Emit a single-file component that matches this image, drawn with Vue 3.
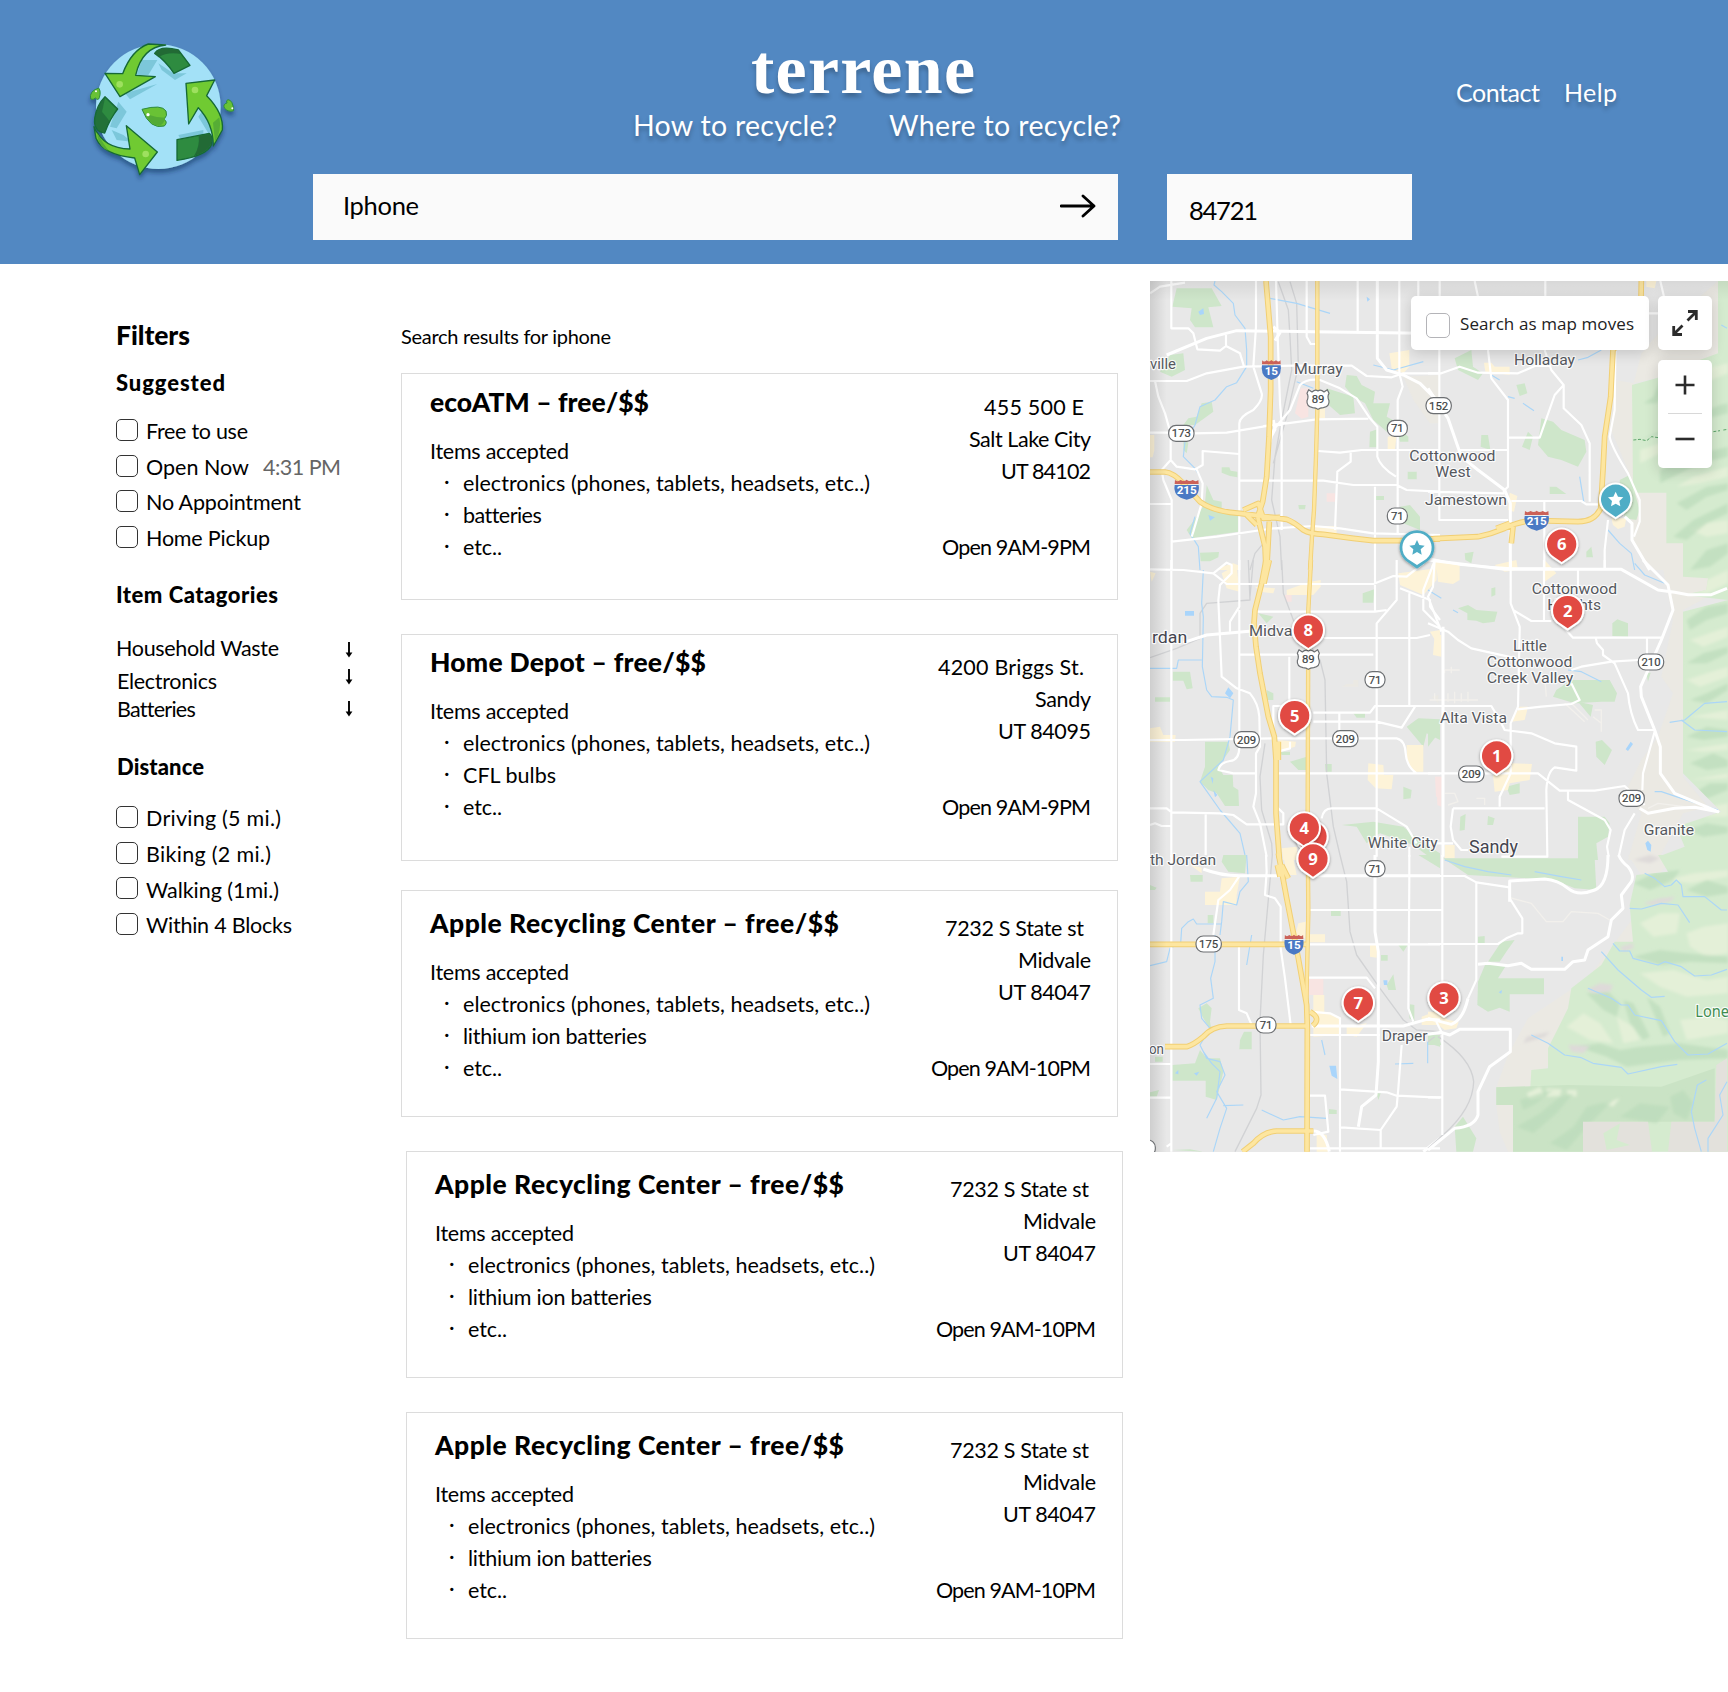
<script setup>
// Spreads a line of text to the given width by adjusting its tracking.
const fitText = (el, { value }) => {
  if (!value) return
  el.style.letterSpacing = '0px'
  const range = document.createRange()
  range.selectNodeContents(el)
  const natural = range.getBoundingClientRect().width
  const spacing = (value - natural) / Math.max(1, el.textContent.length - 1)
  el.style.letterSpacing = `${spacing}px`
  el.style.marginRight = `${-spacing}px`
}
const vFit = { mounted: fitText }

const suggested = [
  { label: 'Free to use', w: 102 },
  { label: 'Open Now', w: 103, note: '4:31 PM' },
  { label: 'No Appointment', w: 155 },
  { label: 'Home Pickup', w: 124 },
]
const distances = [
  { label: 'Driving (5 mi.)', w: 135 },
  { label: 'Biking (2 mi.)', w: 125 },
  { label: 'Walking (1mi.)', w: 133 },
  { label: 'Within 4 Blocks', w: 146 },
]
const categories = [
  { label: 'Household Waste', w: 163 },
  { label: 'Electronics', w: 100 },
  { label: 'Batteries', w: 78 },
]

const apple = {
  name: 'Apple Recycling Center – free/$$', nameW: 409,
  item: 'lithium ion batteries', itemW: 183,
  street: '7232 S State st', streetW: 139, city: 'Midvale', cityW: 73,
  zip: 'UT 84047', zipW: 93, hours: 'Open 9AM-10PM', hoursW: 160,
}
const results = [
  {
    name: 'ecoATM – free/$$', nameW: 219, item: 'batteries', itemW: 78,
    street: '455 500 E', streetW: 100, city: 'Salt Lake City', cityW: 122,
    zip: 'UT 84102', zipW: 90, hours: 'Open 9AM-9PM', hoursW: 149,
  },
  {
    name: 'Home Depot – free/$$', nameW: 276, item: 'CFL bulbs', itemW: 93,
    street: '4200 Briggs St.', streetW: 146, city: 'Sandy', cityW: 56,
    zip: 'UT 84095', zipW: 93, hours: 'Open 9AM-9PM', hoursW: 149,
  },
  apple, apple, apple,
]

// Map sheets: each one has its own origin inside the map.
const tiles = [
  {
    x: 0, y: 0,
    park: 'M110 55H215L245 108L205 112L220 172L165 172L150 150L155 115L97 110ZM90 255L130 250L135 300L95 320L60 305ZM620 315L650 318L665 345L705 365L700 400L750 400L740 440L768 455L770 480L740 485L700 450L675 400L640 380L615 350ZM560 355L640 380L645 430L600 435L560 400ZM185 400L215 395L220 425L165 465H130L145 445L170 440ZM245 592H268L272 602L292 605V622L270 618L245 608ZM200 645L220 690L245 695V720L295 735V785L155 805L140 780L170 740L195 700ZM780 710L810 705L840 740V780L790 760ZM690 485L712 478V532H688ZM770 470L805 500V515H780ZM180 848L237 846L235 862L210 874H182ZM803 605H830V628H803ZM475 705H497L495 718H477ZM708 678H732V690H708ZM130 500L145 520L140 550L130 540Z',
    town: 'M748 250L808 240V290L790 310L755 295ZM743 500L770 495L765 538H743ZM30 495H43V540L38 562H30ZM530 415H555V445H530ZM525 768H590V790H525ZM245 890L280 880L300 888V900H235Z',
    pink: 'M482 355H505V440L485 446L465 430ZM560 670H585V695H560Z',
    beige: 'M790 320L900 315V460H870L820 390Z',
    rail: 'M415 35L445 120L450 200L455 300L425 450L405 560L395 690L420 800L425 900M450 35L470 100L475 290L440 440L400 580M330 900L345 850L370 820',
    water: 'M225 33L222 45L245 65L280 100L285 135L315 175L320 240V290L290 338L260 350L225 390L180 410L165 465L135 515L130 560L165 595L180 620M165 740L150 790L175 830L180 900M390 85L470 100L570 130M700 285L760 300L850 275M470 335L520 355',
    lake: 'M175 125L190 115L192 132L180 135ZM205 735L225 742L210 752ZM680 80L690 88L682 95Z',
    road: 'M30 70L60 50L135 38M94 33V175H145L160 190L172 238L240 242L258 228V195M258 228L300 250L312 290M348 33V170L340 290L365 370Q370 390 340 420Q298 440 298 460V900M408 33L412 170L420 400L425 460V780M500 33V200L512 222H530M653 33V190M778 33V310L788 350L773 390V790M30 333H140L200 310L310 290L460 287H635L680 318L755 322L790 310H900M370 468L440 460L530 448L685 446M160 490L260 488L440 458M30 488H90M390 520L400 480L450 420L480 345Q500 325 540 330L600 355L650 385L690 445L712 470V560Q720 590 768 620M45 333L55 380L75 430L92 490V570L65 600L70 630L95 690V900M92 570L110 590L165 598L188 585V543L298 552M30 702H94M95 815L230 800L400 775L520 768L600 775L700 790L900 795M170 598L188 640L185 700L160 785L155 800M298 632H550L640 645L770 645L800 660L900 665M535 543L600 548L665 540H900M632 548V575L592 605L585 780M705 650V900M835 33V80',
    wide: 'M80 255L200 205L290 182L520 185L850 190M712 33V265L740 300L790 315L840 340L900 400M400 170L420 188L405 212M400 450L405 478L396 495',
    freeway: 'M378 33L392 200V360L387 500L380 620L368 695L353 740L375 830L378 900M388 755L384 830L380 900M30 606H75Q100 608 130 640L180 695Q220 725 300 730L440 748Q460 755 490 780Q510 792 550 793L640 805L700 812H780L900 807M310 720L355 700L370 745L420 742M320 735L350 765',
    highway: 'M532 33V420L528 560L522 720L516 800L510 900',
  },
  {
    x: 864, y: 0,
    park: 'M340 445L375 455L400 480L470 510L475 545L450 590L400 570L360 560L330 525ZM282 530L300 485L315 500L305 540ZM265 345L290 340L298 370L275 378ZM80 265L130 240L135 290L165 310L150 330L90 300ZM160 495H180L187 540L158 530ZM365 650H385L415 672H365ZM575 630L605 615L635 720L625 750L590 745ZM110 850L137 845L130 880L112 870ZM475 845L490 830L495 862H475Z',
    town: 'M168 278H190L200 290H245V315L172 305ZM245 668L268 678L258 725L240 720ZM550 745H595L590 770L570 777L555 765ZM30 868L75 880V900H10V885ZM655 33H685L680 55L655 50Z',
    beige: 'M617 340L560 330L545 470L600 600L612 660H617ZM617 340L640 250L700 180L870 33V260L700 320ZM600 640H720V820H765V900H665L615 810Z',
    hill: 'M870 33H900V900H765V820H715V668H615L612 345L700 320L760 290L870 250Z',
    water: 'M450 270L480 262L520 240M540 780L575 820L610 850L620 900M455 620L468 700M190 315L215 330M240 380L260 385M285 400L318 422M880 165L897 175',
    road: 'M35 33V80M140 33L150 80M352 33V80M697 33L708 80M660 130H700M0 310H40L95 290L150 308L270 310L320 288H370M180 240L190 325L240 390V650L225 665M34 240V750H240M95 540H240M350 240L370 300L407 345V415L460 465L485 520V695M407 345L380 375L335 503H240M0 665L230 670M250 693H460L475 703H520M349 695V900M562 240L560 420L545 500Q550 530 600 610L635 690V755L618 800M540 750L530 840V900M0 865L100 885L250 895H370',
    wide: 'M0 355L60 445L100 560L150 600L230 660L247 700V900M590 740L612 760V810L665 900',
    freeway: 'M0 808L20 806L150 800Q190 792 230 775Q280 750 330 752L450 755Q500 755 518 715L525 600L530 500L548 380L555 240L638 150L640 33M205 775L245 760M255 770L250 820',
    highway: '',
  },
  {
    x: 0, y: 870,
    park: 'M98 335H150L158 385L140 388L130 362H98ZM45 412H90V425H45ZM195 545H265L270 570L235 620L250 645H278L280 680L295 690L297 738H255L230 700L205 690L180 665L195 620ZM450 605L500 590L498 630H475ZM668 100L703 88L700 128H668ZM355 160L400 170L380 190ZM800 500L835 475L900 478V540L860 520L850 560ZM605 795L700 785L790 800L850 850L900 880V890L860 885L820 855L720 820L680 850L650 800ZM790 680L815 690L812 715L790 718ZM555 612H575V635H557ZM640 460H675V473H650ZM380 390L400 400V420H380ZM420 575H450V585H425Z',
    town: 'M245 40L290 15L298 95L260 85ZM440 90L510 65L542 60V80L520 105H440ZM775 40L890 25V60L850 105L780 75ZM30 505L60 500L70 525H107L105 545H30ZM415 540L468 545L465 560L415 575ZM685 610L730 615L732 645H760L755 688L707 685L683 660ZM800 555H850V635H820L800 600ZM870 215L900 210V265ZM425 865L470 860L475 900H430ZM345 80L405 85L400 100L360 95ZM30 35L47 40L35 65Z',
    pink: 'M432 105H455V125H440ZM885 650H900V710H888Z',
    beige: 'M605 380H655V360H640V372H620ZM875 410L895 405V430Z',
    rail: 'M30 293L110 265L180 235V160L200 130L330 120L325 0M425 0L430 100L460 180L540 300L555 360L560 640L580 800L600 885M375 550L360 650L365 750L395 850L397 885M340 0L330 110',
    water: 'M190 30L185 130L190 170L187 320L200 390L215 410L260 412L280 420L270 530L250 600L180 665L240 750L300 820L315 885M30 325H110L115 300H185',
    lake: 'M135 153H162V167H135ZM255 400L265 382L280 400L270 415ZM212 650L220 655L218 672ZM220 690L232 705L225 712Z',
    road: 'M94 0V890M30 28L130 30L220 40L260 8L275 15V40L240 75L235 120L245 350L290 385L330 400Q355 430 358 470L360 560L348 580V700L340 740L360 790L380 890M220 40L260 72H700L760 48L800 50L850 10M30 540H130L400 535H770Q795 540 797 580Q800 620 830 640M298 0V140L270 185V215M298 150V560Q298 600 270 603Q240 608 235 630L280 640H345M415 640H900M345 155H705L740 150M770 0V120L710 190V890M705 0V155M300 284H700M550 234H830L870 225M448 290V440M400 530V438H430M520 458H690L705 438H900M520 485H710L785 503L825 440M598 458V535M808 100V435M780 85L870 120V140L900 180M885 0L850 90V150L900 200M30 745H80L95 757L240 760L280 765L320 793H430V760L410 740M197 760V885M545 775Q550 745 575 745H710L800 800L830 850M413 575L450 565V545M30 795L45 790L65 798H95M808 860V890',
    wide: 'M130 248L200 225L345 212M425 440V480',
    freeway: 'M378 0L365 70L345 150L342 190L348 260L360 340L385 470L403 530L408 600V760L418 895M388 0L372 70M415 545V600',
    highway: 'M513 0L505 150L503 760V900',
  },
  {
    x: 864, y: 870,
    park: 'M90 145L120 135L145 150L208 155L200 185L165 190L145 182L118 180V160ZM190 85L202 82V105L190 110ZM568 178L600 190V230L553 228V190ZM385 390L430 360H545L567 400L560 425H520L440 430L375 410ZM450 425L495 435L488 470ZM503 545L522 540L552 570L530 615L505 590ZM450 770H530L545 790L540 830L505 850L510 900H450ZM235 680L275 670V700L245 705ZM0 510L35 515L0 560ZM97 770L113 762L110 810L95 812ZM180 768L200 775L195 795H178ZM655 340L668 338L660 365Z',
    town: 'M25 15L95 10V60L75 72L30 65ZM200 15L265 0L270 30L230 35ZM275 440H300L290 480L250 485ZM195 645L245 610L312 612L305 660L245 670L240 690L200 695ZM50 855H80V895H50ZM350 0L385 40L350 65ZM20 225H40V290L15 285Z',
    pink: 'M25 650H42L40 740L28 735Z',
    beige: 'M700 0H765L840 50V110L765 150V650L840 740L765 760L690 900H600L640 760L590 700L640 600L690 530L735 400L700 350L735 180Z',
    hill: 'M765 0H900V890H690L770 860L745 800L880 755L765 640V155L900 120L765 105L835 90L840 55L765 50Z',
    water: 'M620 10L650 45L710 70M725 487L770 480L830 430L897 425M760 480L800 510L897 515M680 695L700 695L760 715L870 750M420 330L460 335L520 365M0 90L40 115M75 150L90 158',
    lake: 'M593 568L608 545L615 552L600 573ZM652 850L660 842L670 855L668 875L658 870Z',
    fine: 'M5 420H150M20 400V420M60 400V425M80 395V430M100 400V425M120 395V425M50 340V330M70 320V340M50 330H95M50 700H80L90 725L60 735M145 715H170V735M410 430L470 485M430 430L480 480M500 450H520V515M495 470L520 490M400 350H350L355 410M660 745L690 730L770 740',
    road: 'M20 0L15 80L0 110L40 215M0 190L60 215L90 240L130 265L265 295M248 0V130L275 200V215L270 440L248 490V640L215 710V740M255 150L310 183H370M348 0V183M450 30V80M530 0V30M400 195L435 233H700M503 233L507 250L525 270V285L560 310L600 400Q605 460 630 510H680M430 330L460 320L550 305L630 300M657 233V290M270 448L340 440L430 432L455 420L430 370M0 438H190L215 480L230 510L310 520L380 550L445 560V632L380 622Q358 635 355 690L358 890H220M0 640H330L395 692H500L590 678L650 735M75 745H350M75 745L68 800L75 840L100 870L120 870M0 850H75M420 695V720L530 780L548 810L537 860L542 890M680 515L645 640L643 690M620 760L590 810L572 890',
    wide: 'M0 0L230 28H580L690 90L740 97L780 104H850L897 85M645 0L720 75L735 150L700 240L638 380L640 410L680 510L697 560V640L740 700L870 755L800 742L740 745L660 760L635 745M45 200V890',
    freeway: '',
    highway: '',
  },
  {
    x: 0, y: 1755,
    park: 'M250 0H320L315 55L265 50L245 20ZM150 60H188V80H152ZM30 90L50 98L45 105H30ZM203 180H220V205H203ZM175 460L200 445L215 460L210 500L215 530L190 490ZM300 555L312 530H335V583H298ZM97 630L165 625L180 585L200 610L240 610L250 650L230 735L197 725V677H97ZM573 168H602V183H573ZM740 390L760 358L768 405H745ZM775 270H803L790 290ZM835 0H900V40ZM723 300H743V317H723ZM810 448L823 450V500L808 490ZM865 540H900V575L865 565ZM567 762L590 765V777H567ZM45 605H68V620H45ZM30 712L57 705L50 725H30ZM97 885L150 883L190 890ZM710 715H722L715 735Z',
    town: 'M245 70L300 65L290 120V150H255L195 150V110L240 110ZM510 238H555V262H510ZM475 205L497 200L495 250L465 245ZM520 420H553V470L600 490V540L520 545ZM620 515L680 505L650 545L620 540ZM690 270H712L710 308L690 305ZM845 485L895 465L900 510H845ZM430 0L460 10L470 60H440ZM530 835L560 840L565 890H530ZM150 30L185 38V55Z',
    pink: 'M503 372H550V420H503Z',
    rail: 'M600 0L620 80L630 230L650 300L720 400L790 495L830 525L900 530M397 0L370 300L360 500L363 720L350 760L285 890',
    water: 'M320 0L325 80L300 110L290 150L250 140L245 200L240 240M245 207H170L160 192L145 200L125 220L122 265L90 280L80 320L30 332M225 240L225 320L212 370L220 430L180 450L185 490L210 520L180 570L200 610L240 620L255 660L230 710L260 760L240 820L220 890M190 590L215 625L240 650L230 730L200 790M250 752L310 750M365 765L430 795L480 785L560 790M335 240L320 330M863 560V625M765 627L820 625M545 555L555 600',
    lake: 'M568 632L588 632L592 672L575 662ZM730 376H742V390H732ZM105 655L115 645V658ZM162 655L178 650L170 662Z',
    road: 'M94 0V890M297 65L270 105L235 135L220 240M378 0L380 50L375 120L405 130L422 155V280L435 370L452 510M297 272V465L320 475L335 510M510 165H900M510 268H900M808 0V70L805 460L820 500M500 368H680L705 400M510 470L570 475L600 490V890M510 540H720M785 570L775 700L770 755L722 825V880M600 703L740 712L770 722L900 728M603 817L722 825M510 722H555L565 830L520 840M510 880H900M30 627H94M30 728H94M80 875L94 865',
    wide: 'M190 42Q240 62 300 62H430M520 62H900M705 0V230L715 290V620L708 720L665 755L655 815M515 513H790L860 493L900 495M520 828Q555 828 568 890M850 890L900 850',
    freeway: 'M415 -5L440 130L475 310L500 450L502 520L501 890M425 30L445 70M412 30L420 65M75 575H140Q160 570 190 545Q215 515 260 513H500M30 268H500M308 890L340 865Q370 830 410 828H520M510 470Q545 490 518 512',
    highway: 'M504 60L505 170L500 400L499 470',
  },
  {
    x: 864, y: 1755,
    park: 'M45 10L500 10L505 105L440 100L380 75L120 60ZM150 380L175 320L235 330L210 370H348V418H245V470L215 458L180 470L148 450ZM180 320L220 260L260 255L235 290L215 320ZM80 815L105 785L145 850L135 890H85ZM150 245L170 243V265H150ZM0 538L30 540L40 570L0 570Z',
    town: 'M0 470H30L60 495L92 500L85 520L50 525L25 505H0Z',
    beige: 'M615 190L480 370L300 490L240 600L205 697L310 700L440 520L520 340L615 260ZM600 0H740L700 50L640 60ZM205 750H255V890H240L215 830Z',
    hill: 'M690 0H900V890H255V750H205V697H307L310 645L360 640V580L400 500L420 460L430 400L520 330L560 260L615 260L605 150L625 60L720 50Z',
    band: 'M205 697L420 690L700 695L860 640V800H465V890H255V750H205Z',
    rock: 'M865 630L897 610V890H720L730 800H860ZM465 800H660L672 890H465Z',
    rail: 'M30 545Q130 610 137 680Q135 760 45 840L0 880M0 560L20 545',
    water: 'M650 55L680 70L710 95L730 90L745 75L760 90L765 125H830L880 165H897M605 160L640 162L700 145L750 150L785 203M555 265L575 288H605L615 310L690 330L710 320L760 335L800 363L850 360L897 343M520 290L570 345L640 405L670 427L710 424M480 400L550 430L580 450H600L620 480L700 497L740 560L780 600L840 597L897 565M310 540L360 565L410 600L460 608L495 625L580 637L600 657L700 635L748 628M835 675L808 690L790 770L800 820L820 890M897 680L875 720L885 780L840 850V890M50 15L110 35L180 50L250 60M320 50L400 65L460 75',
    lake: 'M400 305H405V318H400ZM212 412L222 405L220 416Z',
    fine: 'M245 128L310 145L355 200H405L430 170L510 175L545 195',
    road: 'M0 63H110L145 82L245 97M245 130L283 190V235H270L235 250L210 267H0M145 82V375L120 430M43 0V380M43 540V840M0 165H43M0 727H43M25 500L45 540',
    wide: 'M245 140V78L350 72Q390 75 420 100T500 105Q540 90 540 0M572 0Q580 20 600 35Q620 60 610 80L580 120L585 160L550 195L540 245L480 285L470 315L435 320L410 343H310L280 325L240 332L180 325L150 328M120 430Q105 495 70 508L0 490M0 538L40 532L65 540L95 523H247V590L185 635L150 710V780Q140 815 80 820L0 885',
    freeway: '',
    highway: '',
  },
]

// Relief of the mountain side, in map units.
const shade = 'M1500 510L1590 470L1680 430L1740 405L1764 400V430L1680 450L1600 480ZM1560 600L1640 560L1764 530V560L1680 580L1600 620L1560 640ZM1610 700L1700 650L1764 640V660L1700 680L1640 720ZM1600 800L1660 750L1764 700V730L1700 760L1640 810ZM1510 400L1540 380L1560 330L1600 290L1590 350L1550 400ZM1650 900L1700 840L1764 820V850L1710 890ZM1640 1050L1700 1010L1764 1000V1030L1700 1050L1650 1080ZM1640 1180L1690 1150L1764 1130V1150L1700 1180ZM1650 1290L1700 1270L1764 1240V1260L1700 1300ZM1640 1400L1700 1370L1764 1380V1400L1690 1410ZM1650 1480L1720 1450L1764 1470V1490L1700 1500ZM1660 1570L1710 1540L1764 1540V1560L1690 1590ZM1640 1680L1700 1660L1764 1670V1690L1690 1700ZM1480 1840L1540 1810L1620 1800L1600 1830L1530 1860ZM1640 1860L1700 1830L1764 1850V1870L1700 1880ZM1480 2060L1560 2040L1640 2050L1764 2060V2080L1650 2075L1560 2085ZM1340 2170L1400 2160L1440 2200L1430 2240L1390 2220ZM1450 2190L1480 2200L1530 2300L1510 2310L1470 2260ZM1520 2180L1560 2210L1590 2290L1570 2300ZM1310 2330L1380 2320L1440 2340L1500 2330L1620 2320L1764 2340V2365L1620 2370L1460 2390L1400 2360ZM1130 2570L1200 2530L1260 2480L1300 2470L1250 2530L1180 2590ZM1140 2490L1200 2470L1240 2460L1190 2500L1150 2520ZM1230 2620L1300 2570L1340 2510L1420 2490L1350 2560L1280 2640ZM1440 2540L1500 2500L1590 2510L1550 2560L1490 2550ZM1590 2480L1630 2460L1660 2500L1640 2550L1600 2530Z'
const glow = 'M1590 340L1640 310L1720 290L1764 280V310L1690 340L1620 380ZM1500 540L1560 520L1620 500L1580 540L1500 580ZM1610 650L1660 620L1764 590V620L1680 640ZM1650 780L1700 760L1764 750V790L1700 800ZM1640 960L1700 930L1764 900V940L1700 970ZM1650 1110L1764 1070V1100L1690 1130ZM1640 1230L1700 1210L1764 1190V1220L1680 1250ZM1650 1340L1764 1320V1350L1700 1345ZM1640 1440L1764 1420V1440L1690 1445ZM1650 1530L1764 1510V1525ZM1650 1620L1764 1600V1640L1700 1640ZM1500 1960L1560 1930L1620 1930L1610 1990L1540 2000ZM1640 1990L1690 1970L1764 1960V2050L1700 2060L1650 2030ZM1500 2110L1600 2100L1700 2130L1764 2120V2170L1640 2180L1560 2150ZM1280 2270L1330 2230L1380 2260L1420 2320L1350 2310ZM1430 2240L1480 2270L1500 2310L1450 2320ZM1620 2250L1700 2240L1764 2250V2290L1640 2310ZM1160 2470L1200 2450L1215 2480L1170 2490ZM1220 2455L1265 2458L1260 2478L1220 2480ZM1280 2460H1310V2480L1285 2475ZM1390 2500L1440 2485L1420 2510ZM1380 2600L1440 2560L1480 2620L1390 2640ZM1580 1830L1660 1810L1764 1800V1820L1650 1840Z'
const stone = 'M1340 2160L1380 2140L1420 2145L1410 2165L1360 2170ZM1285 2325L1350 2328L1330 2350L1295 2345ZM1510 1900L1560 1885L1605 1880L1590 1895L1540 1905ZM1160 2300L1230 2285L1215 2300L1150 2320ZM1480 1770L1530 1755L1560 1765L1530 1780ZM1440 2030L1480 2020V2035L1450 2045Z'

const places = [
  { t: 'ville', x: 30, y: 298, w: 78 }, { t: 'Murray', x: 462, y: 311, w: 146 },
  { t: 'Holladay', x: 1122, y: 284, w: 183 }, { t: 'Cottonwood', x: 808, y: 573, w: 258 },
  { t: 'West', x: 886, y: 621, w: 106 }, { t: 'Jamestown', x: 855, y: 706, w: 246 },
  { t: 'Midvale', x: 327, y: 1098, w: 168 }, { t: 'rdan', x: 36, y: 1118, w: 106, s: 49, c: 'city' },
  { t: 'Cottonwood', x: 1175, y: 972, w: 256 }, { t: 'Heights', x: 1222, y: 1020, w: 161 },
  { t: 'Little', x: 1119, y: 1143, w: 102 }, { t: 'Cottonwood', x: 1040, y: 1191, w: 257 },
  { t: 'Creek Valley', x: 1040, y: 1238, w: 260 }, { t: 'Alta Vista', x: 900, y: 1358, w: 201 },
  { t: 'White City', x: 683, y: 1734, w: 210 }, { t: 'th Jordan', x: 30, y: 1784, w: 198 },
  { t: 'Sandy', x: 987, y: 1749, w: 147, s: 54, c: 'city' }, { t: 'Granite', x: 1511, y: 1695, w: 151 },
  { t: 'Draper', x: 725, y: 2314, w: 138 }, { t: 'on', x: 27, y: 2353, w: 45 },
  { t: 'Lone', x: 1666, y: 2241, w: 101, c: 'peak' },
]
const routes = [
  { n: '173', x: 124, y: 490 }, { n: '71', x: 772, y: 475 }, { n: '71', x: 772, y: 738 },
  { n: '152', x: 896, y: 407 }, { n: '71', x: 705, y: 1229 }, { n: '209', x: 320, y: 1409 },
  { n: '209', x: 616, y: 1406 }, { n: '210', x: 1533, y: 1176 }, { n: '209', x: 994, y: 1512 },
  { n: '209', x: 1475, y: 1585 }, { n: '71', x: 705, y: 1796 }, { n: '175', x: 206, y: 2022 },
  { n: '71', x: 378, y: 2265 }, { n: '', x: 16, y: 2634 },
]
const usRoutes = [{ x: 534, y: 388 }, { x: 505, y: 1168 }]
const interstates = [
  { n: '15', x: 394, y: 300, s: 0.78 }, { n: '215', x: 140, y: 659, s: 1 },
  { n: '215', x: 1190, y: 752, s: 1 }, { n: '15', x: 462, y: 2024, s: 0.78 },
]
const pins = [
  { n: '6', x: 1265, y: 823 }, { n: '2', x: 1283, y: 1022 }, { n: '8', x: 505, y: 1081 },
  { n: '5', x: 464, y: 1337 }, { n: '1', x: 1070, y: 1458 }, { n: '', x: 516, y: 1700 },
  { n: '4', x: 493, y: 1674 }, { n: '9', x: 519, y: 1767 }, { n: '7', x: 655, y: 2199 },
  { n: '3', x: 912, y: 2184 },
]
const star = 'M0 -23L7 -8L23 -6L11 5L14 21L0 13L-14 21L-11 5L-23 -6L-7 -8Z'
</script>

<template>
  <div class="page">
    <header class="top">
      <svg class="logo" viewBox="0 0 540 480">
        <defs>
          <filter id="drop" x="-20%" y="-20%" width="140%" height="150%">
            <feDropShadow dx="0" dy="12" stdDeviation="6" flood-color="#10284a" flood-opacity=".45" />
          </filter>
        </defs>
        <g filter="url(#drop)">
          <circle cx="265" cy="230" r="187" fill="#a3e1f7" />
          <path d="M215 90H262L235 135H200ZM165 190L262 162L180 208ZM265 100L310 130L350 130L315 150L275 120ZM145 215L170 245L140 295L120 290ZM125 300L160 315L185 335L140 330ZM325 315L400 300V315L330 325ZM405 230L425 300L415 310L385 260Z" fill="#7cc7da" />
          <g stroke="#176936" stroke-width="4" stroke-linejoin="round">
            <path d="M105 130L158 131Q185 60 235 42L287 45Q215 52 197 136L256 140L150 200Z" fill="#70ca31" />
            <path d="M348 160L434 150L410 197Q462 250 457 300L430 348Q430 280 385 233L356 282Z" fill="#70ca31" />
            <path d="M72 290Q100 355 180 357L169 287L262 366L209 434L194 384Q100 375 78 325Z" fill="#70ca31" />
            <path d="M254 70Q270 45 325 60L360 106L312 130Q285 90 254 70Z" fill="#2d8b3f" />
            <path d="M105 200L143 237Q120 265 104 309Q70 305 74 265Q80 225 105 200Z" fill="#217139" />
            <path d="M321 329L418 310Q430 320 424 345Q410 378 321 391Z" fill="#2d8b3f" />
          </g>
          <path d="M254 70Q270 45 325 60L333 72Q290 65 266 82ZM386 317L418 312Q429 322 422 345Q412 366 372 378Q390 350 386 317Z" fill="#206b35" />
          <path d="M105 204L139 237L118 272L96 245Z" fill="#2d8b3f" />
          <path d="M82 310Q105 350 116 362L104 357Q82 340 82 310ZM429 278L448 262Q456 300 435 336Z" fill="#56ad35" />
          <circle cx="149" cy="163" r="10" fill="#9ee05e" />
          <circle cx="375" cy="180" r="10" fill="#9ee05e" />
          <circle cx="227" cy="372" r="10" fill="#9ee05e" />
          <g fill="#69c234" stroke="#2d8b3f" stroke-width="3">
            <path d="M216 238Q275 222 288 243Q294 257 282 268Q295 276 283 288Q240 300 216 238Z" />
            <path d="M86 174Q56 184 62 207Q70 211 76 204Q85 213 88 203Q94 185 86 174Z" />
            <path d="M491 242Q489 210 474 209Q467 211 471 219Q458 222 463 234Q475 248 491 242Z" />
          </g>
          <path d="M225 251Q255 262 286 263Q282 284 266 287Q240 285 225 251Z" fill="#52aa36" />
          <circle cx="234" cy="254" r="5" fill="#fff" />
          <circle cx="78" cy="184" r="3" fill="#fff" />
          <circle cx="487" cy="235" r="3" fill="#fff" />
        </g>
      </svg>
      <div class="center">
        <h1><span v-fit="224">terrene</span></h1>
        <nav class="guide">
          <a v-fit="204">How to recycle?</a>
          <a v-fit="232">Where to recycle?</a>
        </nav>
        <div class="fields">
          <div class="field query">
            <span v-fit="76">Iphone</span>
            <svg width="36" height="24" viewBox="0 0 36 24"><path d="M1 12H34M23 2L34 12L23 22" fill="none" stroke="#000" stroke-width="2.8" stroke-linecap="round" stroke-linejoin="round" /></svg>
          </div>
          <div class="field zip"><span v-fit="69">84721</span></div>
        </div>
      </div>
      <nav class="links"><a v-fit="84">Contact</a><a v-fit="53">Help</a></nav>
    </header>

    <main>
      <aside>
        <h2><span v-fit="74">Filters</span></h2>
        <h3><span v-fit="109">Suggested</span></h3>
        <ul class="checks">
          <li v-for="o in suggested" :key="o.label">
            <i></i><span v-fit="o.w">{{ o.label }}</span>
            <em v-if="o.note" v-fit="78">{{ o.note }}</em>
          </li>
        </ul>
        <h3 class="cat-title"><span v-fit="162">Item Catagories</span></h3>
        <ul class="cats">
          <li v-for="c in categories" :key="c.label">
            <span v-fit="c.w">{{ c.label }}</span>
            <svg width="8" height="16" viewBox="0 0 8 16"><path d="M4 0V14" stroke="#000" stroke-width="1.9" /><path d="M.6 10.5H7.4L4 15.5Z" /></svg>
          </li>
        </ul>
        <h3 class="dist-title"><span v-fit="87">Distance</span></h3>
        <ul class="checks far">
          <li v-for="o in distances" :key="o.label"><i></i><span v-fit="o.w">{{ o.label }}</span></li>
        </ul>
      </aside>

      <section class="results">
        <p class="summary"><span v-fit="210">Search results for iphone</span></p>
        <article v-for="(r, i) in results" :key="i" class="card">
          <div class="info">
            <h4><span v-fit="r.nameW">{{ r.name }}</span></h4>
            <p><span v-fit="139">Items accepted</span></p>
            <ul>
              <li><span v-fit="407">electronics (phones, tablets, headsets, etc..)</span></li>
              <li><span v-fit="r.itemW">{{ r.item }}</span></li>
              <li><span v-fit="39">etc..</span></li>
            </ul>
          </div>
          <div class="where">
            <p class="street"><span v-fit="r.streetW">{{ r.street }}</span></p>
            <p><span v-fit="r.cityW">{{ r.city }}</span></p>
            <p><span v-fit="r.zipW">{{ r.zip }}</span></p>
            <p class="hours"><span v-fit="r.hoursW">{{ r.hours }}</span></p>
          </div>
        </article>
      </section>

      <section class="map">
        <svg class="canvas" viewBox="30 33 1734 2613" preserveAspectRatio="none">
          <defs>
            <linearGradient id="edge-left"><stop offset="0" stop-opacity=".11" /><stop offset="1" stop-opacity="0" /></linearGradient>
            <linearGradient id="edge-top" x2="0" y2="1"><stop offset="0" stop-opacity=".07" /><stop offset="1" stop-opacity="0" /></linearGradient>
            <filter id="soft"><feGaussianBlur stdDeviation="5" /></filter>
            <filter id="pin-shadow" x="-30%" y="-30%" width="160%" height="170%"><feDropShadow dx="0" dy="3" stdDeviation="5" flood-opacity=".4" /></filter>
            <clipPath id="hills">
              <path v-for="t in tiles.filter(s => s.hill)" :key="t.y" :d="t.hill" :transform="`translate(${t.x} ${t.y})`" />
            </clipPath>
          </defs>
          <rect x="30" y="33" width="1734" height="2613" fill="#e8e8e8" />
          <g v-for="(t, i) in tiles" :key="'a' + i" :transform="`translate(${t.x} ${t.y})`">
            <path :d="t.beige" fill="#ebe9e3" />
            <path :d="t.park" fill="#cee6ca" />
            <path :d="t.town" fill="#fdf3d8" />
            <path :d="t.pink" fill="#f8e4e2" />
            <path :d="t.hill" fill="#d5ebcf" />
            <path :d="t.band" fill="#cae3c5" />
          </g>
          <g clip-path="url(#hills)">
            <g filter="url(#soft)">
              <path :d="glow" fill="#e4f0d8" />
              <path :d="shade" fill="#badaba" opacity=".65" />
            </g>
          </g>
          <path :d="stone" fill="#dedad9" filter="url(#soft)" />
          <path :d="tiles[5].rock" fill="#e3e1dc" transform="translate(864 1755)" />
          <path d="M1390 2590L1440 2560L1430 2610L1470 2625L1400 2640Z" fill="#d5ebcf" />
          <g v-for="(t, i) in tiles" :key="'b' + i" :transform="`translate(${t.x} ${t.y})`" fill="none" stroke-linejoin="round">
            <path :d="t.rail" stroke="#d1d2d4" stroke-width="4" />
            <path :d="t.water" stroke="#abd6f8" stroke-width="3.5" />
            <path :d="t.lake" fill="#a9d5fb" />
            <path :d="t.fine" stroke="#f2f0ec" stroke-width="4" />
            <path :d="t.road" stroke="#fff" stroke-width="6.5" />
            <path :d="t.wide" stroke="#fff" stroke-width="9" />
          </g>
          <g v-for="(t, i) in tiles" :key="'c' + i" :transform="`translate(${t.x} ${t.y})`" fill="none" stroke="#f1cf74" stroke-linejoin="round">
            <path :d="t.highway" stroke-width="13" />
            <path :d="t.freeway" stroke-width="17" />
          </g>
          <g v-for="(t, i) in tiles" :key="'d' + i" :transform="`translate(${t.x} ${t.y})`" fill="none" stroke="#fde6a0" stroke-linejoin="round">
            <path :d="t.highway" stroke-width="8" />
            <path :d="t.freeway" stroke-width="11" />
          </g>
          <path d="M1480 510L1500 508L1520 512L1535 500L1555 503M1720 485L1740 482M1750 480L1764 478" fill="none" stroke="#5ea56b" stroke-width="3" stroke-dasharray="9 5" />
          <rect x="30" y="33" width="50" height="2613" fill="url(#edge-left)" />
          <rect x="30" y="33" width="1734" height="60" fill="url(#edge-top)" />

          <g v-for="(r, i) in routes" :key="'r' + i" :transform="`translate(${r.x} ${r.y})`">
            <rect :x="r.n.length > 2 ? -38 : -30" y="-24" :width="r.n.length > 2 ? 76 : 60" height="48" rx="22" fill="#fff" stroke="#6c6f72" stroke-width="3.5" />
            <text class="num" y="12">{{ r.n }}</text>
          </g>
          <g v-for="(r, i) in usRoutes" :key="'u' + i" :transform="`translate(${r.x} ${r.y})`">
            <path d="M-28 -29L-18 -22Q-8 -31 0 -25Q8 -31 18 -22L28 -29L33 -18Q27 -8 33 4Q35 22 16 25Q6 25 0 30Q-6 25 -16 25Q-35 22 -33 4Q-27 -8 -33 -18Z" fill="#fff" stroke="#6c6f72" stroke-width="3.5" stroke-linejoin="round" />
            <text class="num" y="12">89</text>
          </g>
          <g v-for="(r, i) in interstates" :key="'s' + i" :transform="`translate(${r.x} ${r.y})`">
            <g :transform="`scale(${r.s} 1)`">
              <path d="M-35 -29Q-28 -22 -18 -29Q-8 -22 0 -30Q8 -22 18 -29Q28 -22 35 -29L36 -17H-36Z" fill="#cb6158" />
              <path d="M-36 -14H36Q42 22 0 30Q-42 22 -36 -14Z" fill="#4a79c4" />
            </g>
            <text class="num inter" y="14">{{ r.n }}</text>
          </g>
          <text v-for="(p, i) in places" :key="'p' + i" class="place" :class="p.c" :x="p.x" :y="p.y" :textLength="p.w" lengthAdjust="spacingAndGlyphs" :font-size="p.s || 46">{{ p.t }}</text>

          <g v-for="(p, i) in pins" :key="'n' + i" :transform="`translate(${p.x} ${p.y})`">
            <path d="M-25 43A50 50 0 1 1 25 43L0 60Z" fill="#fff" filter="url(#pin-shadow)" />
            <path d="M-21 38.5A44 44 0 1 1 21 38.5L0 53Z" fill="#e14a43" />
            <text class="digit" y="18">{{ p.n }}</text>
          </g>
          <g transform="translate(1427 688)">
            <path d="M-25 43A50 50 0 1 1 25 43L0 60Z" fill="#fff" filter="url(#pin-shadow)" />
            <path d="M-21 38.5A44 44 0 1 1 21 38.5L0 53Z" fill="#4fadc6" />
            <path :d="star" fill="#fff" />
          </g>
          <g transform="translate(831 833)">
            <path d="M-27 44A52 52 0 1 1 27 44L0 63Z" fill="#4fadc6" filter="url(#pin-shadow)" />
            <path d="M-21 38.5A44 44 0 1 1 21 38.5L0 52Z" fill="#fff" />
            <path :d="star" fill="#4fadc6" />
          </g>
        </svg>
        <div class="controls">
          <div class="panel moves"><i></i><span v-fit="174">Search as map moves</span></div>
          <div class="buttons">
            <div class="panel square">
              <svg width="26" height="26" viewBox="0 0 26 26"><path d="M15.5 10.5L24 2M16 1.5H24.3V10M10.5 15.5L2 24M1.7 16V24.5H10" fill="none" stroke="#2b2b2b" stroke-width="2.8" /></svg>
            </div>
            <div class="panel zoom">
              <svg width="20" height="20" viewBox="0 0 20 20"><path d="M.5 10H19.5M10 .5V19.5" stroke="#2b2b2b" stroke-width="2.6" /></svg>
              <hr />
              <svg width="20" height="20" viewBox="0 0 20 20"><path d="M.5 10H19.5" stroke="#2b2b2b" stroke-width="2.6" /></svg>
            </div>
          </div>
        </div>
      </section>
    </main>
  </div>
</template>

<style>
body { background: #fff; }
</style>

<style scoped>
.page { width: 1728px; height: 1692px; overflow: hidden; background: #fff; color: #000; font: 400 21.5px/32px Lato, "Liberation Sans", sans-serif; }
.page * { box-sizing: border-box; }
h1, h2, h3, h4, p, ul { margin: 0; padding: 0; }
ul { list-style: none; }
span, a, em { white-space: nowrap; }
svg { display: block; flex: none; }

.top { display: flex; height: 264px; background: #5288c2; color: #fff; }
.logo { width: 180px; height: 160px; margin: 30px 63px 0 70px; }
.center { width: 1099px; flex: none; }
h1 { height: 75px; margin: 30px 0 0 438px; font: 700 70px/80px "Liberation Serif", serif; text-shadow: 0 4px 4px rgba(0, 0, 0, .25); }
.guide { display: flex; gap: 52px; height: 40px; margin-left: 320px; font-size: 28.5px; line-height: 40px; text-shadow: 0 4px 4px rgba(0, 0, 0, .25); }
.fields { display: flex; gap: 49px; margin-top: 29px; color: #000; font-size: 25.5px; }
.field { display: flex; height: 66px; background: #fafafa; }
.query { width: 805px; justify-content: space-between; padding: 15px 22px 0 30px; }
.query svg { margin-top: 5px; }
.zip { width: 245px; padding: 20px 0 0 22px; }
.links { display: flex; gap: 24px; margin: 76px 0 0 44px; font-size: 25px; text-shadow: 0 4px 4px rgba(0, 0, 0, .25); }

main { display: flex; align-items: flex-start; }
aside { width: 401px; flex: none; padding: 55px 0 0 116px; }
h2 { font-size: 26.5px; line-height: 32px; font-weight: 900; }
h3 { margin-top: 16px; font-size: 22px; line-height: 32px; font-weight: 900; }
.checks { margin: 16px 0 0; }
.checks li { display: flex; height: 35.7px; }
.checks i { width: 22px; height: 22px; margin: 4px 8px 0 0; border: 1px solid #333; border-radius: 5px; flex: none; }
.checks em { margin-left: 14px; color: #666; font-style: normal; }
.cat-title { margin-top: 21px; }
.cats { width: 237px; margin-top: 23.7px; line-height: 28px; }
.cats li { display: flex; justify-content: space-between; height: 27.8px; }
.cats li:first-child { height: 32.3px; }
.cats li:not(:first-child) span { margin-left: 1px; }
.cats svg { margin-top: 6.5px; }
.cats li:first-child svg { margin-top: 8px; }
.cats li:nth-child(2) svg { margin-top: 2.5px; }
.dist-title { margin: 28.5px 0 0 1px; }
.far { margin-top: 19.5px; }
.far i { margin-top: 3.5px; }

.results { width: 749px; flex: none; padding-top: 56px; }
.summary { font-size: 20px; line-height: 32px; }
.card { display: flex; justify-content: space-between; width: 717px; height: 227px; padding: 0 26px 0 28px; border: 1px solid #dcdcdc; }
.summary + .card { margin-top: 21px; }
.card + .card { margin-top: 34px; }
.card:nth-child(4) { margin-top: 29px; }
.card:nth-child(n + 5) { margin-left: 5px; }
.info { padding-top: 12px; }
.where { padding-top: 17px; text-align: right; }
.card:nth-child(3) .info { padding-top: 11px; }
.card:nth-child(3) .where { padding-top: 16px; }
.card:nth-child(n + 4) .info { padding-top: 16px; }
.card:nth-child(n + 4) .where { padding-top: 21px; }
h4 { margin-bottom: 17px; font-size: 26.5px; line-height: 32px; font-weight: 900; }
.card li { display: flex; padding-left: 14px; }
.card li::before { content: "·"; width: 19px; line-height: 28px; }
.street { padding-right: 7px; }
.hours { margin-top: 44px; }

.map { position: relative; width: 578px; height: 871px; margin-top: 17px; flex: none; }
.canvas { width: 578px; height: 871px; }
.place { font-family: Roboto, sans-serif; fill: #55585e; stroke: #fff; stroke-width: 7; stroke-opacity: .85; stroke-linejoin: round; paint-order: stroke; }
.city { fill: #44454f; }
.peak { fill: #3f8c50; font-family: "Noto Sans", sans-serif; }
.num { font: 400 34px Roboto, sans-serif; text-anchor: middle; fill: #3c3f42; stroke: #3c3f42; stroke-width: .6; }
.inter { font-weight: 700; font-size: 35px; fill: #fff; stroke: none; }
.digit { font: 700 50px "Noto Sans", sans-serif; text-anchor: middle; fill: #fff; }
.controls { position: absolute; top: 15px; right: 16px; display: flex; gap: 9px; align-items: flex-start; }
.panel { background: #fff; border-radius: 5px; box-shadow: 0 3px 14px rgba(0, 0, 0, .16); }
.moves { display: flex; align-items: center; width: 238px; height: 54px; padding: 2px 0 0 15px; color: #222; font: 400 17px/24px "Open Sans", "Noto Sans", sans-serif; }
.moves i { width: 24px; height: 25px; margin: 3px 10px 0 0; border: 1px solid #b4b4b8; border-radius: 5px; }
.buttons { display: flex; flex-direction: column; gap: 10px; }
.square { display: flex; align-items: center; justify-content: center; width: 54px; height: 54px; }
.zoom { display: flex; flex-direction: column; align-items: center; width: 54px; height: 108px; padding: 15px 0; }
.zoom hr { width: 34px; height: 1px; margin: 18px 0 15px; border: 0; background: #d8d8d8; flex: none; }
</style>
